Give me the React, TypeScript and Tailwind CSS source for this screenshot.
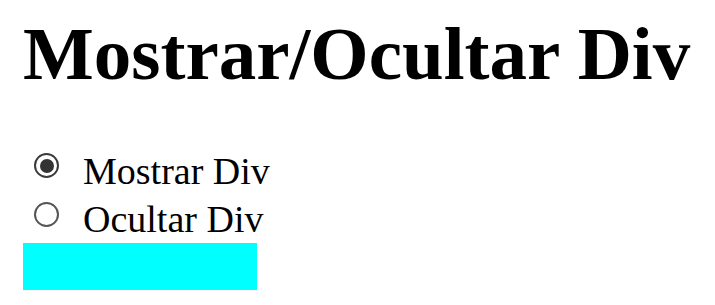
import { useState } from "react";

export default function App() {
    const [visible, setVisible] = useState<boolean>(true);

    return (
        <div className="pl-[23px] bg-white text-black min-h-[305px]" style={{ fontFamily: '"Liberation Serif", "Times New Roman", serif' }}>
            <h1 className="text-[75px] leading-[75px] font-bold pt-[16px]">Mostrar/Ocultar Div</h1>

            <div className="mt-[55px]">
                <label className="flex items-start h-[48px] cursor-pointer" onClick={() => setVisible(true)}>
                    <span className="ml-[11px] mt-[7px] w-[25px] h-[25px] rounded-full border-[2.5px] border-[#3b3b3b] flex items-center justify-center">
                        {visible ? <span className="w-[14px] h-[14px] rounded-full bg-[#333333]" /> : null}
                    </span>
                    <span className="ml-[24px] text-[38px] leading-[50px]">Mostrar Div</span>
                </label>
                <label className="flex items-start h-[48px] cursor-pointer" onClick={() => setVisible(false)}>
                    <span className="ml-[11px] mt-[8px] w-[25px] h-[25px] rounded-full border-[2px] border-[#555555] flex items-center justify-center">
                        {!visible ? <span className="w-[14px] h-[14px] rounded-full bg-[#333333]" /> : null}
                    </span>
                    <span className="ml-[24px] text-[38px] leading-[50px]">Ocultar Div</span>
                </label>
            </div>

            {visible ? <div className="mt-[1px] w-[234px] h-[47px] bg-[#00ffff]" /> : null}
        </div>
    )
}
